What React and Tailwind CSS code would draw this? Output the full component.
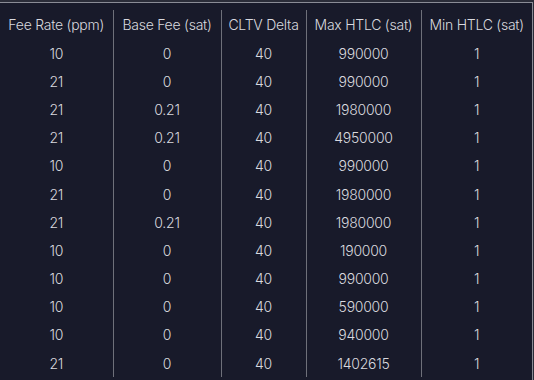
const headers = ["Fee Rate (ppm)", "Base Fee (sat)", "CLTV Delta", "Max HTLC (sat)", "Min HTLC (sat)"];

const rows = [
  ["10", "0", "40", "990000", "1"],
  ["21", "0", "40", "990000", "1"],
  ["21", "0.21", "40", "1980000", "1"],
  ["21", "0.21", "40", "4950000", "1"],
  ["10", "0", "40", "990000", "1"],
  ["21", "0", "40", "1980000", "1"],
  ["21", "0.21", "40", "1980000", "1"],
  ["10", "0", "40", "190000", "1"],
  ["10", "0", "40", "990000", "1"],
  ["10", "0", "40", "590000", "1"],
  ["10", "0", "40", "940000", "1"],
  ["21", "0", "40", "1402615", "1"],
];

const widths = ["w-[113px]", "w-[108px]", "w-[85px]", "w-[115px]", "w-[111px]"];

export default function App() {
  return (
    <div className="w-[534px] h-[380px] overflow-hidden bg-[#2a2c38] pt-[2px] font-['Inter',sans-serif]">
      <div className="h-full w-[533px] bg-[#181a2a] border-t border-r border-[#8a8c96] pt-[7px]">
        <table className="border-collapse text-[14px] font-light text-[#d8d9df] tracking-[-0.25px]">
          <thead>
            <tr className="h-[29px]">
              {headers.map((h, i) => (
                <th
                  key={h}
                  className={`${widths[i]} p-0 font-light text-center whitespace-nowrap ${i > 0 ? "border-l border-[#6e707a]" : ""}`}
                >
                  {h}
                </th>
              ))}
            </tr>
          </thead>
          <tbody>
            {rows.map((r, ri) => (
              <tr key={ri} className="h-[28.2px]">
                {r.map((c, i) => (
                  <td
                    key={i}
                    className={`p-0 text-center ${i > 0 ? "border-l border-[#6e707a]" : ""}`}
                  >
                    {c}
                  </td>
                ))}
              </tr>
            ))}
          </tbody>
        </table>
      </div>
    </div>
  );
}
